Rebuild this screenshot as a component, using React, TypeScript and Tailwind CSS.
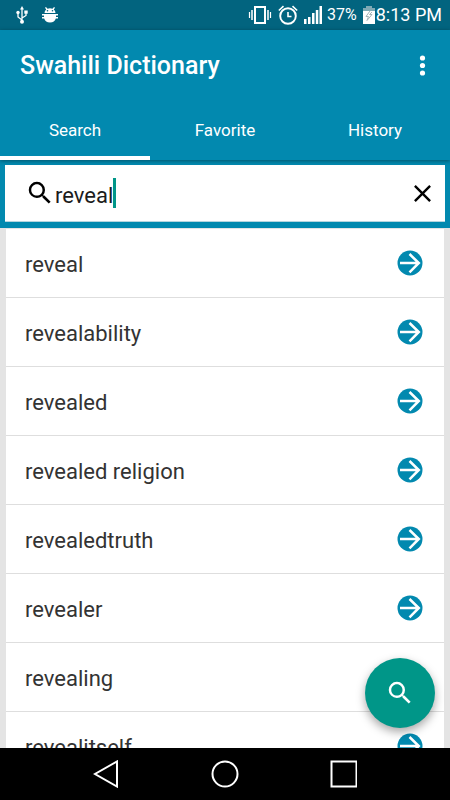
import { useState } from "react";

const tabs = ["Search", "Favorite", "History"];

const words = [
  "reveal",
  "revealability",
  "revealed",
  "revealed religion",
  "revealedtruth",
  "revealer",
  "revealing",
  "revealitself",
];

function SearchIcon({ className }: { className?: string }) {
  return (
    <svg viewBox="0 0 24 24" fill="currentColor" className={className}>
      <path d="M15.5 14h-.79l-.28-.27A6.471 6.471 0 0 0 16 9.5 6.5 6.5 0 1 0 9.5 16c1.61 0 3.09-.59 4.23-1.57l.27.28v.79l5 4.99L20.49 19l-4.99-5zm-6 0C7.01 14 5 11.99 5 9.5S7.01 5 9.5 5 14 7.01 14 9.5 11.99 14 9.5 14z" />
    </svg>
  );
}

function UsbIcon() {
  return (
    <svg viewBox="0 0 12 18" className="h-[18px] w-3" fill="none" stroke="white">
      <path d="M6 3v12M6 14 2 11V7M6 12l4-2.500V6" strokeWidth="1.300" />
      <path d="M6 0l2 3.500H4z" fill="white" stroke="none" />
      <circle cx="2" cy="6.500" r="1.700" fill="white" stroke="none" />
      <path d="M8.300 4.500h3.400v3.200H8.300z" fill="white" stroke="none" />
      <circle cx="6" cy="15.700" r="2" fill="white" stroke="none" />
    </svg>
  );
}

function DebugIcon() {
  return (
    <svg viewBox="0 0 16 17" className="h-[17px] w-4" fill="white">
      <path d="M4 0l1.500 1.700a6 6 0 0 1 5 0L12 0l1 .7-1.200 1.700A5 5 0 0 1 13.500 6h-11a5 5 0 0 1 1.700-3.600L3 .7z" />
      <path d="M0 7h16v1.500h-2v1.500h2v1.500h-2.200a6 5.500 0 0 1-11.600 0H0V10h2V8.500H0z" />
      <circle cx="5.500" cy="3.800" r=".8" fill="#02647f" />
      <circle cx="10.500" cy="3.800" r=".8" fill="#02647f" />
    </svg>
  );
}

function VibrateIcon() {
  return (
    <svg viewBox="0 0 24 18" className="h-[18px] w-6" fill="none" stroke="white">
      <rect x="7" y="1" width="10" height="16" strokeWidth="2" />
      <path d="M4 4v10M20 4v10" strokeWidth="1.500" />
      <path d="M1.500 6v6M22.500 6v6" strokeWidth="1.200" />
    </svg>
  );
}

function AlarmIcon() {
  return (
    <svg viewBox="0 0 20 20" className="size-5" fill="none" stroke="white">
      <circle cx="10" cy="11" r="7.800" strokeWidth="1.900" />
      <path d="M10 7v4.500h3.500" strokeWidth="1.600" />
      <path d="M.8 5.500 5.500 1.200M19.200 5.500l-4.700-4.300" strokeWidth="1.600" />
    </svg>
  );
}

function SignalIcon() {
  return (
    <svg viewBox="0 0 18 18" className="size-[18px]" fill="white">
      <path d="M0 13h2.500v5H0zM4 11h2.500v7H4zM8 7h2.500v11H8zM11.800 4h2.500v14h-2.500zM15.500 0H18v18h-2.500z" />
    </svg>
  );
}

function BatteryIcon() {
  return (
    <svg viewBox="0 0 12 18" className="h-[18px] w-3">
      <path d="M3 0h6v2h3v4H0V2h3z" fill="#7fa9b5" />
      <path d="M0 5h12v13H0z" fill="white" />
      <path d="M7 5 3 10.500h2.500L4 14.500 9 8.500H6.500L9 6" fill="none" stroke="#a5b4b8" />
    </svg>
  );
}

function StatusBar() {
  return (
    <div className="flex h-[30px] shrink-0 items-center bg-[#02647f] pr-2 pl-4 text-white">
      <UsbIcon />
      <span className="ml-3.5">
        <DebugIcon />
      </span>
      <div className="ml-auto flex items-center">
        <VibrateIcon />
        <span className="ml-1.5">
          <AlarmIcon />
        </span>
        <span className="ml-1.5">
          <SignalIcon />
        </span>
        <span className="ml-[5px] text-base">37%</span>
        <span className="ml-1.5">
          <BatteryIcon />
        </span>
        <span className="ml-px text-lg">8:13 PM</span>
      </div>
    </div>
  );
}

function NavBar() {
  return (
    <nav className="flex h-[52px] shrink-0 items-center justify-center gap-[90px] bg-black">
      <button aria-label="Back">
        <svg viewBox="0 0 28 28" className="size-7" fill="none" stroke="white" strokeWidth="2">
          <path d="M24 1.500v25L2 14z" />
        </svg>
      </button>
      <button aria-label="Home">
        <svg viewBox="0 0 28 28" className="size-7" fill="none" stroke="white" strokeWidth="2">
          <circle cx="14" cy="14" r="12.500" />
        </svg>
      </button>
      <button aria-label="Recent apps">
        <svg viewBox="0 0 28 28" className="size-7" fill="none" stroke="white" strokeWidth="2">
          <path d="M2.500 1.500h25v25h-25z" />
        </svg>
      </button>
    </nav>
  );
}

export default function App() {
  const [tab, setTab] = useState("Search");
  const [query, setQuery] = useState("reveal");

  return (
    <div className="flex h-screen flex-col bg-[#e4e4e4] font-['Roboto',sans-serif]">
      <StatusBar />

      <header className="relative z-10 shrink-0 bg-[#0289af] text-white shadow-[0_1px_4px_rgba(0,0,0,0.4)]">
        <div className="flex h-[72px] items-center justify-between pr-3 pl-5">
          <h1 className="text-[25px] font-medium">Swahili Dictionary</h1>
          <button aria-label="More options" className="p-1">
            <svg viewBox="0 0 24 24" className="size-6" fill="currentColor">
              <circle cx="12.500" cy="4" r="2.600" />
              <circle cx="12.500" cy="11.500" r="2.600" />
              <circle cx="12.500" cy="19" r="2.600" />
            </svg>
          </button>
        </div>
        <div className="grid grid-cols-3">
          {tabs.map((name) => (
            <button
              key={name}
              onClick={() => setTab(name)}
              className={`h-[58px] border-b-4 pt-1 text-[17px] ${
                tab === name ? "border-white" : "border-transparent"
              }`}
            >
              {name}
            </button>
          ))}
        </div>
      </header>

      {/* search box */}
      <div className="shrink-0 bg-[#0289af] px-[5px] pt-[5px] pb-1.5">
        <div className="flex h-[57px] items-center border-b border-[#b5d5de] bg-white pr-2 pl-5">
          <label htmlFor="query" aria-label="Search">
            <SearchIcon className="size-[30px]" />
          </label>
          <input
            id="query"
            value={query}
            onChange={(e) => setQuery(e.target.value)}
            className="field-sizing-content pt-1 text-[22px] text-[#1c1c1c] outline-none"
          />
          <span className="h-[30px] w-[3px] bg-[#009688]" />
          <button aria-label="Clear" onClick={() => setQuery("")} className="ml-auto">
            <svg viewBox="0 0 24 24" className="size-[29px]" fill="currentColor">
              <path d="M19 6.410 17.590 5 12 10.590 6.410 5 5 6.410 10.590 12 5 17.590 6.410 19 12 13.410 17.590 19 19 17.590 13.410 12z" />
            </svg>
          </button>
        </div>
      </div>

      <main className="relative min-h-0 flex-1 overflow-hidden px-1.5 pt-px">
        <ul className="bg-white">
          {words.map((word) => (
            <li
              key={word}
              className="flex h-[69px] items-center justify-between border-b border-[#dedede] pr-5 pl-[19px] text-[22px] text-[#333]"
            >
              <span className="pt-0.5">{word}</span>
              <button aria-label={`Open ${word}`}>
                <svg viewBox="0 0 28 28" className="size-7">
                  <circle cx="14" cy="14" r="12.500" fill="#0289af" />
                  <path
                    d="M4 14h19M13.500 5 22.800 14l-9.300 9.300"
                    fill="none"
                    stroke="white"
                    strokeWidth="2.500"
                  />
                </svg>
              </button>
            </li>
          ))}
        </ul>
        <button
          aria-label="Search"
          className="absolute right-[15px] bottom-5 flex size-[70px] items-center justify-center rounded-full bg-[#009688] text-white shadow-[0_4px_10px_rgba(0,0,0,0.35)]"
        >
          <SearchIcon className="size-[30px]" />
        </button>
      </main>

      <NavBar />
    </div>
  );
}
